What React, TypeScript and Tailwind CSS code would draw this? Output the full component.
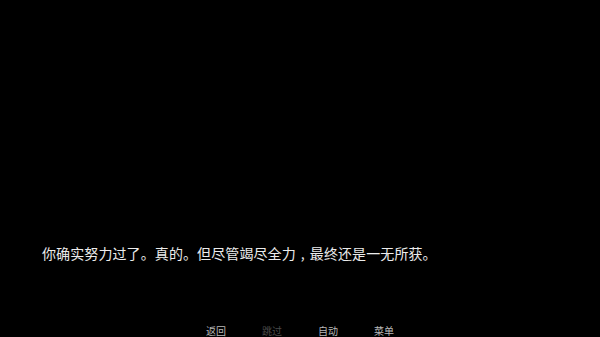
const items = [
  { label: '返回', dim: false },
  { label: '跳过', dim: true },
  { label: '自动', dim: false },
  { label: '菜单', dim: false },
];

export default function App() {
  return (
    <div
      className="w-[600px] h-[337px] bg-black flex flex-col overflow-hidden"
      style={{ fontFamily: '"Noto Sans CJK SC", "Liberation Sans", sans-serif' }}
    >
      <div className="flex-1" />
      <p className="pl-[42px] text-[14px] leading-[20px] text-[#ececec] tracking-[0.1px]">
        你确实努力过了。真的。但尽管竭尽全力<span className="inline-block w-[14px] text-center">,</span>最终还是一无所获。
      </p>
      <div className="h-[61px]" />
      <nav className="flex justify-center gap-[36px] h-[13px] items-start text-[10px] leading-[14px]">
        {items.map((it) => (
          <span key={it.label} className={it.dim ? 'text-[#4a4a4a]' : 'text-[#b8b8b8]'}>
            {it.label}
          </span>
        ))}
      </nav>
    </div>
  );
}
